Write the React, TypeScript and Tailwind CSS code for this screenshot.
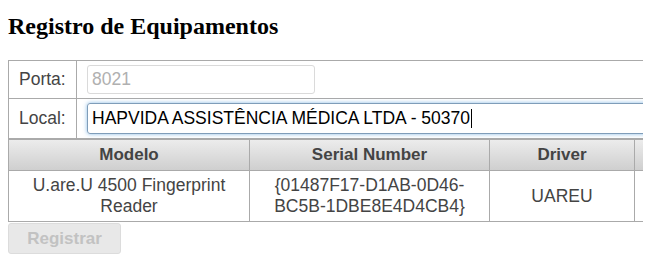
import clsx from "clsx";

const cell = "flex items-center justify-center text-center border-r border-[#aaa] shrink-0";

export default function App() {
  return (
    <div className="w-[643px] overflow-hidden bg-white pl-2 pt-3 font-['Liberation_Sans',Arial,sans-serif] text-[#444]">
      <h2 className="font-['Liberation_Serif','Times_New_Roman',serif] text-[24px] leading-[28px] font-bold text-black">
        Registro de Equipamentos
      </h2>

      {/* form */}
      <div className="mt-5 w-[700px] border border-[#aaa] text-[17.5px]">
        <div className="flex h-[38px] border-b border-[#aaa]">
          <div className="flex w-[68px] shrink-0 items-center border-r border-[#aaa] pl-[10px]">Porta:</div>
          <div className="flex items-center pl-[10px]">
            <div className="flex h-[29px] w-[228px] items-center rounded-[3px] border border-[#dadada] px-[4px] text-[#b0b0b0]">
              8021
            </div>
          </div>
        </div>
        <div className="flex h-[39px]">
          <div className="flex w-[68px] shrink-0 items-center border-r border-[#aaa] pl-[10px]">Local:</div>
          <div className="flex flex-1 items-center pl-[10px]">
            <div className="flex h-[31px] w-[600px] items-center rounded-[3px] border border-[#7f9db9] px-[4px] text-black shadow-[0_0_4px_rgba(90,160,220,0.7)]">
              HAPVIDA ASSISTÊNCIA MÉDICA LTDA - 50370
              <span className="ml-px h-[19px] w-px bg-black" />
            </div>
          </div>
        </div>
      </div>

      {/* equipment table */}
      <div className="w-[800px] border-y border-l border-[#aaa] text-[17.5px]">
        <div className="flex h-[31px] border-b border-[#aaa] bg-gradient-to-b from-[#ececec] to-[#cfcfcf] text-[17px] font-bold leading-5">
          <div className={clsx(cell, "w-[241px]")}>Modelo</div>
          <div className={clsx(cell, "w-[240px]")}>Serial Number</div>
          <div className={clsx(cell, "w-[145px]")}>Driver</div>
          <div className={clsx(cell, "w-[120px]")} />
        </div>
        <div className="flex h-[50px] leading-[21px]">
          <div className={clsx(cell, "w-[241px] px-3")}>U.are.U 4500 Fingerprint Reader</div>
          <div className={clsx(cell, "w-[240px] px-3")}>{"{01487F17-D1AB-0D46-BC5B-1DBE8E4D4CB4}"}</div>
          <div className={clsx(cell, "w-[145px]")}>UAREU</div>
          <div className={clsx(cell, "w-[120px]")} />
        </div>
      </div>

      <button
        disabled
        className="mt-px mb-[10px] h-[31px] w-[113px] rounded-[3px] border border-[#dcdcdc] bg-[#e8e8e8] text-[17px] font-bold text-[#c2c2c2]"
      >
        Registrar
      </button>
    </div>
  );
}
